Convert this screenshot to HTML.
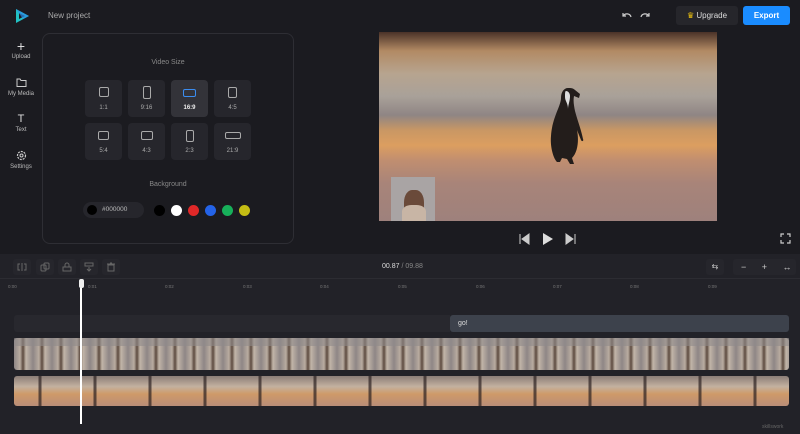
<!DOCTYPE html><html><head><style>
*{margin:0;padding:0;box-sizing:border-box}
body{width:800px;height:434px;background:#1c1c21;font-family:"Liberation Sans",sans-serif;color:#ccc;position:relative;overflow:hidden}
.a{position:absolute}
.side div{position:absolute;left:0;width:42px;text-align:center;font-size:6px;color:#bbb}
.tile{position:absolute;width:37px;height:37px;background:#26262c;border-radius:4px;font-size:6px;color:#aaa;text-align:center}
.tile i{display:block;margin:7px auto 5px;border:1.3px solid #aaa;border-radius:2px}
.tile span{position:absolute;bottom:6px;left:0;right:0}
.dot{position:absolute;top:205px;width:11px;height:11px;border-radius:50%}
.tb{position:absolute;top:259px;width:18px;height:16px;background:#26262c;border-radius:3px}
.tb svg{position:absolute;left:4px;top:3px}
.ru{position:absolute;top:284px;font-size:4.5px;color:#777}
</style></head><body>
<div class="a" style="left:0;top:0;width:800px;height:254px;background:#1b1b20"></div>
<svg class="a" style="left:14px;top:8px" width="16" height="16"><path d="M2 1 L15 8 L2 15 Z" fill="#22c1c3"/><path d="M5 5 L11 8 L5 11 Z" fill="#1b1b20"/><path d="M2 1 L15 8 L9 11 Z" fill="#2c8be8" opacity=".7"/></svg>
<div class="a" style="left:48px;top:11px;font-size:8px;color:#aaa">New project</div>
<div class="side">
<div style="top:40px;font-size:14px;line-height:12px;color:#ddd">+</div><div style="top:54px">Upload</div>
<div style="top:78px"><svg width="11" height="9"><path d="M1 1h3l1 1.5h5v6H1z" fill="none" stroke="#ccc" stroke-width="1"/></svg></div><div style="top:91px">My Media</div>
<div style="top:113px;font-size:11px;color:#ddd">T</div><div style="top:127px">Text</div>
<div style="top:150px"><svg width="11" height="11"><circle cx="5.5" cy="5.5" r="4" fill="none" stroke="#ccc" stroke-width="1.2" stroke-dasharray="2 1"/><circle cx="5.5" cy="5.5" r="1.5" fill="none" stroke="#ccc"/></svg></div><div style="top:164px">Settings</div>
</div>
<div class="a" style="left:42px;top:33px;width:252px;height:211px;border:1px solid #2e2e34;border-radius:8px"></div>
<div class="a" style="left:42px;top:59px;width:252px;text-align:center;font-size:7px;color:#888">Video Size</div>
<div class="tile" style="left:85px;top:80px"><i style="width:10px;height:10px"></i><span>1:1</span></div>
<div class="tile" style="left:128px;top:80px"><i style="width:8px;height:13px;margin-top:6px"></i><span>9:16</span></div>
<div class="tile" style="left:171px;top:80px;background:#333339"><i style="width:13px;height:8px;border-color:#3b8df0;margin-top:9px"></i><span style="color:#eee;font-weight:bold">16:9</span></div>
<div class="tile" style="left:214px;top:80px"><i style="width:9px;height:11px"></i><span>4:5</span></div>
<div class="tile" style="left:85px;top:123px"><i style="width:11px;height:9px;margin-top:8px"></i><span>5:4</span></div>
<div class="tile" style="left:128px;top:123px"><i style="width:12px;height:9px;margin-top:8px"></i><span>4:3</span></div>
<div class="tile" style="left:171px;top:123px"><i style="width:8px;height:12px"></i><span>2:3</span></div>
<div class="tile" style="left:214px;top:123px"><i style="width:16px;height:7px;margin-top:9px"></i><span>21:9</span></div>
<div class="a" style="left:42px;top:181px;width:252px;text-align:center;font-size:7px;color:#888">Background</div>
<div class="a" style="left:83px;top:202px;width:61px;height:16px;background:#26262c;border-radius:8px"></div>
<div class="a" style="left:87px;top:205px;width:10px;height:10px;border-radius:50%;background:#000"></div>
<div class="a" style="left:102px;top:206px;font-size:6.5px;color:#bbb">#000000</div>
<div class="dot" style="left:154px;background:#000"></div>
<div class="dot" style="left:171px;background:#fff"></div>
<div class="dot" style="left:188px;background:#e02828"></div>
<div class="dot" style="left:205px;background:#2463e8"></div>
<div class="dot" style="left:222px;background:#17b05a"></div>
<div class="dot" style="left:239px;background:#c4bd14"></div>
<svg class="a" style="left:620px;top:10px" width="32" height="12"><path d="M3 3v3h3M3 6c2-3 7-3 8 1" fill="none" stroke="#ccc" stroke-width="1.2"/><path d="M29 3v3h-3M29 6c-2-3-7-3-8 1" fill="none" stroke="#ccc" stroke-width="1.2"/></svg>
<div class="a" style="left:676px;top:6px;width:62px;height:19px;background:#26262b;border-radius:3px;font-size:8px;color:#ddd;line-height:19px;text-align:center"><span style="color:#f1c40f">♛</span> Upgrade</div>
<div class="a" style="left:743px;top:6px;width:47px;height:19px;background:#1a8cff;border-radius:3px;font-size:8px;color:#fff;font-weight:bold;line-height:19px;text-align:center">Export</div>
<div class="a" style="left:379px;top:32px;width:338px;height:189px;background:linear-gradient(180deg,#4a3228 0%,#b28a64 10%,#b7a48f 22%,#a9a199 34%,#8f8584 44%,#c99764 52%,#dc9e60 60%,#c08e70 68%,#a88479 80%,#9e817c 100%)"></div>
<svg class="a" style="left:538px;top:85px" width="60" height="85"><path d="M30 3c-4 0-7 4-7 10 0 8-9 20-10 38-1 10 2 22 6 26h3l2-4 5 1 3 5h4l-2-6c6-6 7-18 5-28l4 10c1 2 3 1 2-1-2-10-6-20-8-28-1-5-2-10-1-15l5 2 1-4-5-4c-2-2-4-2-7-2z" fill="#231d1b"/><path d="M28 6c2 0 4 2 4 5 0 5-2 9-2 13 0-6-3-8-3-12 0-3 0-6 1-6z" fill="#ddd"/></svg>
<div class="a" style="left:391px;top:177px;width:44px;height:44px;background:#a9a4a4"></div>
<div class="a" style="left:404px;top:190px;width:20px;height:31px;background:#6a4a3a;border-radius:40% 40% 0 0"></div>
<div class="a" style="left:402px;top:205px;width:24px;height:16px;background:#c8b5a5;border-radius:40% 40% 0 0"></div>
<svg class="a" style="left:518px;top:232px" width="60" height="14"><path d="M2 2v10M11 2L4 7l7 5z" fill="#ccc" stroke="#ccc"/><path d="M25 1l10 6-10 6z" fill="#ddd"/><path d="M57 2v10M48 2l7 5-7 5z" fill="#ccc" stroke="#ccc"/></svg>
<svg class="a" style="left:780px;top:233px" width="11" height="11"><path d="M1 4V1h3M7 1h3v3M10 7v3H7M4 10H1V7" fill="none" stroke="#ccc" stroke-width="1.2"/></svg>
<div class="a" style="left:0;top:254px;width:800px;height:180px;background:#222228"></div>
<div class="a" style="left:0;top:278px;width:800px;height:1px;background:#2c2c32"></div>
<div class="tb" style="left:13px"><svg width="10" height="10"><path d="M5 1v8M3 2H1v6h2M7 2h2v6H7" fill="none" stroke="#666"/></svg></div>
<div class="tb" style="left:36px"><svg width="10" height="10"><rect x="1" y="3" width="5" height="6" rx="1" fill="none" stroke="#666"/><rect x="4" y="1" width="5" height="6" rx="1" fill="none" stroke="#666"/></svg></div>
<div class="tb" style="left:58px"><svg width="10" height="10"><rect x="1" y="5" width="8" height="4" fill="none" stroke="#666"/><path d="M3 5V3a2 2 0 0 1 4 0v2" fill="none" stroke="#666"/></svg></div>
<div class="tb" style="left:80px"><svg width="10" height="10"><rect x="1" y="1" width="8" height="3" fill="none" stroke="#666"/><path d="M5 5v4M3 7l2 2 2-2" fill="none" stroke="#666"/></svg></div>
<div class="tb" style="left:102px"><svg width="10" height="10"><path d="M2 3h6v6H2zM1 2h8M4 1h2" fill="none" stroke="#666"/></svg></div>
<div class="a" style="left:382px;top:263px;font-size:7px;color:#ddd">00.87 <span style="color:#888">/ 09.88</span></div>
<div class="tb" style="left:706px;width:18px;color:#ccc;font-size:8px;text-align:center;line-height:16px">⇆</div>
<div class="a" style="left:733px;top:259px;width:63px;height:16px;background:#26262c;border-radius:3px;font-size:9px;color:#ccc;line-height:16px;word-spacing:13px;padding-left:8px">− + ↔</div>
<div class="ru" style="left:8px">0:00</div><div class="ru" style="left:88px">0:01</div><div class="ru" style="left:165px">0:02</div><div class="ru" style="left:243px">0:03</div><div class="ru" style="left:320px">0:04</div><div class="ru" style="left:398px">0:05</div><div class="ru" style="left:476px">0:06</div><div class="ru" style="left:553px">0:07</div><div class="ru" style="left:630px">0:08</div><div class="ru" style="left:708px">0:09</div>
<div class="a" style="left:14px;top:315px;width:436px;height:17px;background:#28282e;border-radius:3px 0 0 3px"></div>
<div class="a" style="left:450px;top:315px;width:339px;height:17px;background:#3d424c;border-radius:3px;font-size:7px;color:#ddd;padding:5px 8px">go!</div>
<div class="a" style="left:14px;top:338px;width:775px;height:32px;border-radius:3px;background:repeating-linear-gradient(90deg,#8e8686 0,#b9aca0 6px,#5c4a3f 9px,#c2b5a8 12px,#8e8686 19px)"></div>
<div class="a" style="left:14px;top:338px;width:775px;height:8px;background:#8f8a8b;opacity:.6"></div>
<div class="a" style="left:14px;top:376px;width:775px;height:30px;border-radius:3px;background:linear-gradient(180deg,#8b7d77 0%,#c3b1a0 35%,#cf9a68 60%,#b98e78 100%)"></div>
<div class="a" style="left:14px;top:376px;width:775px;height:30px;background:repeating-linear-gradient(90deg,transparent 0,transparent 24px,#2a2020 25px,#2a2020 27px,transparent 28px,transparent 55px);opacity:.7"></div>
<div class="a" style="left:80px;top:284px;width:1.5px;height:140px;background:#fff"></div>
<div class="a" style="left:78.5px;top:279px;width:5px;height:9px;background:#eee;border-radius:2px"></div>
<div class="a" style="left:762px;top:424px;font-size:5px;color:#666">skillswork</div>
</body></html>
